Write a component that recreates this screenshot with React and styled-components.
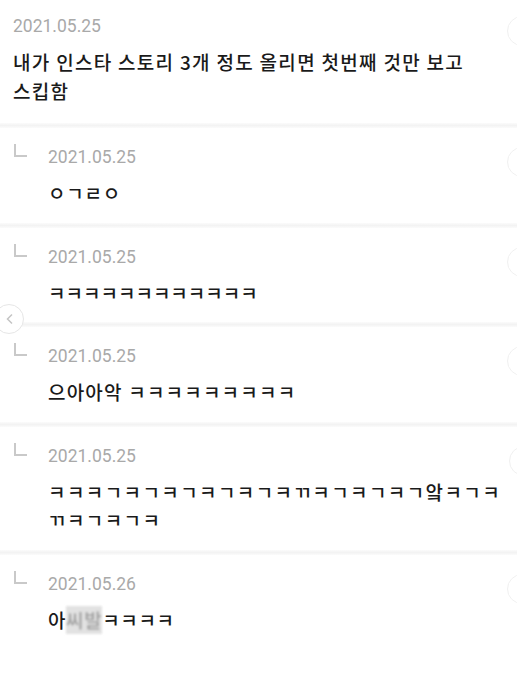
import React from "react";
import styled, { createGlobalStyle } from "styled-components";

const GlobalStyle = createGlobalStyle`
  html, body {
    margin: 0;
    padding: 0;
    background: #ffffff;
  }
`;

// comment thread data
const POST = {
  date: "2021.05.25",
  lines: ["내가 인스타 스토리 3개 정도 올리면 첫번째 것만 보고", "스킵함"],
  spacing: 1.3,
};

const REPLIES = [
  { date: "2021.05.25", lines: ["ㅇㄱㄹㅇ"], spacing: 0.8 },
  { date: "2021.05.25", lines: ["ㅋㅋㅋㅋㅋㅋㅋㅋㅋㅋㅋㅋ"], spacing: 0 },
  { date: "2021.05.25", lines: ["으아아악 ㅋㅋㅋㅋㅋㅋㅋㅋㅋ"], spacing: 1.2 },
  {
    date: "2021.05.25",
    lines: ["ㅋㅋㅋㄱㅋㄱㅋㄱㅋㄱㅋㄱㅋㄲㅋㄱㅋㄱㅋㄱ앜ㅋㄱㅋ", "ㄲㅋㄱㅋㄱㅋ"],
    spacing: 1.4,
  },
  { date: "2021.05.26", lines: ["아", "censored", "ㅋㅋㅋㅋ"], inline: true, spacing: 0.6 },
];

const Comment = ({ date, lines, inline, reply, spacing }) => {
  return (
    <Item $reply={reply}>
      {reply && <Corner />}
      <Body>
        <DateText>{date}</DateText>
        <Content $spacing={spacing}>
          {inline
            ? lines.map((l, i) =>
                l === "censored" ? <Censored key={i}>씨발</Censored> : <span key={i}>{l}</span>
              )
            : lines.map((l, i) => (
                <React.Fragment key={i}>
                  {i > 0 && <br />}
                  {l}
                </React.Fragment>
              ))}
        </Content>
      </Body>
      <SideButton />
    </Item>
  );
};

const App = () => {
  return (
    <Page>
      <GlobalStyle />
      <Comment {...POST} />
      {REPLIES.map((r, i) => (
        <React.Fragment key={i}>
          <Divider />
          <Comment {...r} reply />
        </React.Fragment>
      ))}
      <PrevButton>
        <svg width="12" height="14" viewBox="0 0 12 14">
          <path d="M8 2.5 L3.5 7 L8 11.5" fill="none" stroke="#c4c4c4" strokeWidth="1.5" />
        </svg>
      </PrevButton>
    </Page>
  );
};

const Page = styled.div`
  position: relative;
  width: 517px;
  height: 674px;
  overflow: hidden;
  background: #fff;
`;

const Item = styled.div`
  display: flex;
  align-items: flex-start;
  padding: ${(p) => (p.$reply ? "17px 0 15px 13px" : "14px 0 18px 13px")};
`;

const Corner = styled.div`
  flex-shrink: 0;
  width: 11px;
  height: 11px;
  margin: -1px 21px 0 1px;
  border-left: 2px solid #c9c9c9;
  border-bottom: 2px solid #c9c9c9;
`;

const Body = styled.div`
  flex: 1;
  display: flex;
  flex-direction: column;
  gap: 10px;
`;

const DateText = styled.div`
  font-family: Roboto, "Noto Sans CJK KR", sans-serif;
  font-size: 17.5px;
  line-height: 24px;
  color: #a9a9a9;
`;

const Content = styled.div`
  font-family: "Noto Sans CJK KR", "Noto Sans", sans-serif;
  font-size: 19px;
  font-weight: 500;
  line-height: 28.5px;
  letter-spacing: ${(p) => p.$spacing}px;
  color: #1a1a1a;
  white-space: nowrap;
`;

const Censored = styled.span`
  display: inline-block;
  color: #777;
  background: #d6d6d6;
  filter: blur(1.3px);
  opacity: 0.7;
`;

const SideButton = styled.div`
  flex-shrink: 0;
  width: 28px;
  height: 28px;
  margin: 2px -20px 0 8px;
  border: 1px solid #f0f0f0;
  border-radius: 50%;
`;

const Divider = styled.div`
  height: 5px;
  background: linear-gradient(#fbfbfb, #f3f3f3, #fbfbfb);
`;

const PrevButton = styled.div`
  position: absolute;
  left: -6px;
  top: 304px;
  width: 30px;
  height: 30px;
  border: 1.5px solid #e6e6e6;
  border-radius: 50%;
  background: #fff;
  display: flex;
  align-items: center;
  justify-content: flex-end;
  padding-right: 7px;
  box-sizing: border-box;
`;

export default App;
